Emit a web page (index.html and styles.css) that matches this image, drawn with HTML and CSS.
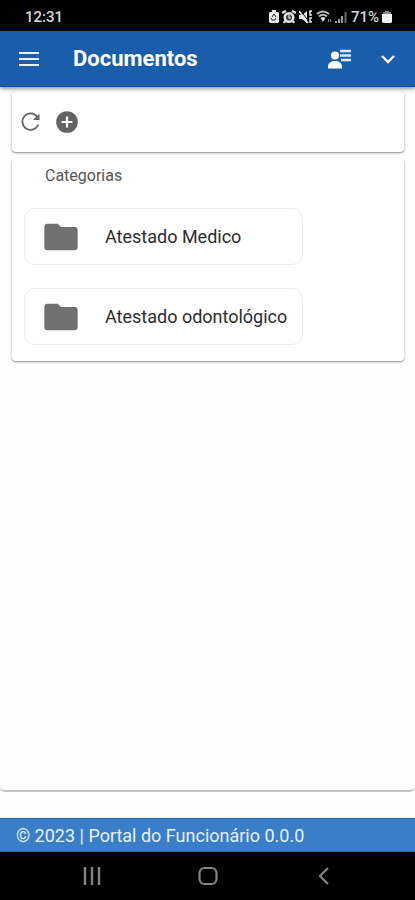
FILE: index.html
```html
<!DOCTYPE html>
<html lang="pt-BR">
<head>
<meta charset="utf-8">
<meta name="viewport" content="width=device-width, initial-scale=1">
<title>Documentos</title>
<link rel="stylesheet" href="styles.css">
</head>
<body>
<div class="status">
  <time>12:31</time>
  <div class="status-icons">
    <svg width="10" height="14" viewBox="0 0 10 14"><path fill="#e8e8e8" d="M3 0h4v2h2l1 1v9l-1 1H1l-1-1V3l1-1h2z"/><path fill="none" stroke="#222" d="M3 7l2-3 2 3M7 8l-1 2H3L2 8"/></svg>
    <svg width="14" height="14" viewBox="0 0 14 14"><path fill="none" stroke="#e8e8e8" stroke-width="2.400" d="M0 3l4-2M14 3l-4-2M3 11l-1 2M11 11l1 2"/><circle cx="7" cy="7.500" r="4.300" fill="#444" stroke="#e8e8e8" stroke-width="2.400"/><path fill="none" stroke="#e8e8e8" stroke-width="1.200" d="M7 5v3h2"/></svg>
    <svg width="14" height="14" viewBox="0 0 14 14"><path fill="#e8e8e8" d="M0 5h3l5-4v12L3 9H0z"/><path stroke="#000" stroke-width="1" d="M2 1l8 11"/><path stroke="#e8e8e8" stroke-width="1.600" d="M0 1l9 12"/><path fill="none" stroke="#e8e8e8" stroke-width="1.500" d="M13 1h-2v4h2M13 8h-2v4h2"/></svg>
    <svg width="16" height="14" viewBox="0 0 16 14"><path fill="none" stroke="#bbb" stroke-width="2" d="M1 4q6-5 12 0M3 6.500q4-3.500 8 0"/><path fill="#ddd" d="M4.500 8q2.500-2 5 0L7 12z"/><path stroke="#777" d="M12.500 9v3M14.500 9v3"/></svg>
    <svg width="13" height="14" viewBox="0 0 13 14"><path stroke="#ccc" stroke-width="1.500" d="M1 11v2M4 9v4M7 6v7"/><path stroke="#666" stroke-width="2" d="M10.500 2v11"/></svg>
    <span class="percent">71%</span>
    <svg width="10" height="14" viewBox="0 0 10 14"><path fill="#888" d="M3 1h4v1h2v3H1V2h2z"/><path fill="#f2f2f2" d="M0 4h10v8l-1 1H1l-1-1z"/></svg>
  </div>
</div>

<header class="appbar">
  <button class="icon-button" aria-label="Menu"><svg width="22" height="16" viewBox="0 0 22 16"><path stroke="#e9f1fa" stroke-width="2" d="M1 2h20M1 8h20M1 14h20"/></svg></button>
  <h1>Documentos</h1>
  <button class="icon-button" aria-label="Perfil"><svg width="24" height="22" viewBox="0 0 24 22"><circle cx="8" cy="7.500" r="4" fill="#fff"/><path fill="#fff" d="M1 20.500v-2.500C1 15 4.500 13 8 13S15 15 15 18V20.500z"/><path stroke="#e0ebf7" stroke-width="2.600" d="M13 3h11M13 7.500h11M14 12h10"/></svg></button>
  <button class="icon-button" aria-label="Mais opções"><svg width="14" height="10" viewBox="0 0 14 10"><path fill="none" stroke="#fff" stroke-width="2.400" d="M1 2l6 6 6-6"/></svg></button>
</header>

<main class="content">
  <section class="card toolbar">
    <button class="icon-button" aria-label="Atualizar"><svg width="24" height="24" viewBox="0 0 24 24"><path fill="none" stroke="#666" stroke-width="1.800" d="M20.300 14.500a8.200 8.200 0 1 1-1.300-8L20.500 8"/><path fill="#666" d="M21.500 3.500V10H15z"/></svg></button>
    <button class="icon-button" aria-label="Adicionar"><svg width="26" height="26" viewBox="0 0 24 24"><path fill="#636363" d="M12 2a10 10 0 1 0 0 20 10 10 0 0 0 0-20zm5 11h-4v4h-2v-4H7v-2h4V7h2v4h4z"/></svg></button>
  </section>
  <section class="card categories">
    <h2>Categorias</h2>
    <div class="list">
      <button class="folder"><svg width="40" height="40" viewBox="0 0 24 24"><path fill="#707070" d="M10 4H4a2 2 0 0 0-2 2v12a2 2 0 0 0 2 2h16a2 2 0 0 0 2-2V8a2 2 0 0 0-2-2h-8z"/></svg><span>Atestado Medico</span></button>
      <button class="folder"><svg width="40" height="40" viewBox="0 0 24 24"><path fill="#707070" d="M10 4H4a2 2 0 0 0-2 2v12a2 2 0 0 0 2 2h16a2 2 0 0 0 2-2V8a2 2 0 0 0-2-2h-8z"/></svg><span>Atestado odontológico</span></button>
    </div>
  </section>
</main>

<footer class="footer">© 2023 | Portal do Funcionário 0.0.0</footer>
<nav class="navbar" aria-label="Sistema">
  <button class="icon-button" aria-label="Recentes"><svg width="20" height="20" viewBox="0 0 20 20"><path stroke="#858585" stroke-width="2.400" d="M3 1v18M10 1v18M17 1v18"/></svg></button>
  <button class="icon-button" aria-label="Início"><svg width="20" height="20" viewBox="0 0 20 20"><rect x="1.500" y="2" width="17" height="16" rx="5" fill="none" stroke="#858585" stroke-width="2.200"/></svg></button>
  <button class="icon-button" aria-label="Voltar"><svg width="20" height="20" viewBox="0 0 20 20"><path fill="none" stroke="#858585" stroke-width="2.200" d="M14 2l-8 8 8 8"/></svg></button>
</nav>
</body>
</html>
```
FILE: styles.css
```css
* {
  box-sizing: border-box;
}

body {
  margin: 0;
  min-height: 100vh;
  display: flex;
  flex-direction: column;
  background: #fefefe;
  font-family: Roboto, "Liberation Sans", sans-serif;
}

svg {
  display: block;
  flex: none;
}

button {
  padding: 0;
  border: 0;
  background: none;
  font: inherit;
  color: inherit;
}

.icon-button {
  display: grid;
  place-items: center;
  flex: none;
}

.status {
  display: flex;
  align-items: center;
  justify-content: space-between;
  height: 31px;
  padding: 2px 23px 0 25px;
  background: #000;
  color: #d8d8d8;
  font-size: 15px;
  font-weight: 500;
}

.status-icons {
  display: flex;
  align-items: center;
  gap: 3px;
}

.appbar {
  position: relative;
  display: flex;
  align-items: center;
  height: 56px;
  padding: 0 20px 0 18px;
  gap: 30px;
  background: #1a5dab;
  border-bottom: 1px solid #0a4f9c;
  color: #fff;
  box-shadow: 0 2px 4px rgba(0, 0, 0, 0.4);
}

.appbar h1 {
  flex: 1;
  margin: 0 0 0 3px;
  font-size: 22px;
  font-weight: 700;
}

.content {
  flex: 1;
  display: flex;
  flex-direction: column;
  gap: 6px;
  margin-bottom: 26px;
  padding: 4px 11px 0 12px;
  border-bottom: 2px solid #c4c4c4;
  border-radius: 0 0 5px 5px;
}

.card {
  background: #fff;
  border-radius: 4px;
  box-shadow: 0 1px 3px rgba(0, 0, 0, 0.3), 0 1px 1px rgba(0, 0, 0, 0.2);
}

.toolbar {
  display: flex;
  align-items: center;
  gap: 12px;
  height: 61px;
  padding: 0 6px;
}

.categories {
  padding: 8px 12px 16px;
}

.categories h2 {
  margin: 0 21px 22px;
  font-size: 16px;
  line-height: 20px;
  font-weight: 400;
  color: #555;
}

.list {
  display: flex;
  flex-direction: column;
  gap: 23px;
}

.folder {
  display: flex;
  align-items: center;
  gap: 24px;
  width: 100%;
  max-width: 279px;
  height: 57px;
  padding: 0 16px;
  border: 1px solid #ededed;
  border-radius: 11px;
  color: #2c2c2c;
  font-size: 18px;
  white-space: nowrap;
}

.footer {
  padding: 2px 16px 0;
  background: #3a7dc9;
  border-top: 1px solid #2368b3;
  border-bottom: 1px solid #2368b3;
  color: #e6f0fb;
  font-size: 18px;
  line-height: 30px;
}

.navbar {
  display: flex;
  align-items: center;
  justify-content: center;
  gap: 96px;
  height: 48px;
  background: #000;
}
```
